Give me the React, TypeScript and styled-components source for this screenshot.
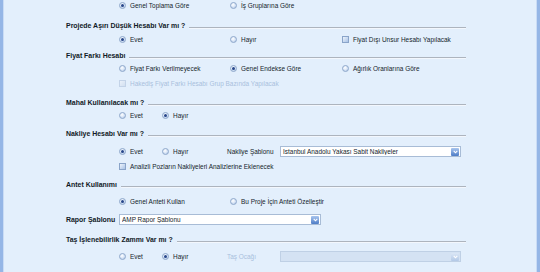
import React from "react";
import styled, { createGlobalStyle } from "styled-components";

const GlobalStyle = createGlobalStyle`
  html, body {
    margin: 0;
    padding: 0;
  }
  body {
    background: #e3effc;
    font-family: "Liberation Sans", Arial, sans-serif;
  }
`;

const Frame = styled.div`
  width: 540px;
  height: 272px;
  box-sizing: border-box;
  overflow: hidden;
  background: #e3effc;
  border-left: 3px solid #95b6e6;
  border-right: 3px solid #95b6e6;
  box-shadow: inset 1px 0 0 #cadcf5, inset -1px 0 0 #cadcf5;
`;

const Content = styled.div`
  padding-left: 63px;
  width: 400px;
`;

const Row = styled.div<{ $mt: number; $indent?: boolean }>`
  display: flex;
  align-items: center;
  height: 13px;
  margin-top: ${(p) => p.$mt}px;
  padding-left: ${(p) => (p.$indent ? 53 : 0)}px;
  box-sizing: border-box;
  width: 400px;
`;

const HeadingText = styled.span`
  font-weight: bold;
  font-size: 6.95px;
  color: #111a27;
  white-space: nowrap;
`;

const Rule = styled.div`
  flex: 1;
  height: 1px;
  margin-left: 4px;
  margin-top: 4px;
  background: #adb4be;
  box-shadow: 0 1px 0 #f3f7fd;
`;

const Cell = styled.div<{ $w?: number; $disabled?: boolean }>`
  display: flex;
  align-items: center;
  gap: 4px;
  flex: none;
  width: ${(p) => (p.$w ? `${p.$w}px` : "auto")};
  font-size: 6.45px;
  color: ${(p) => (p.$disabled ? "#a9bfdc" : "#141d2b")};
  white-space: nowrap;
`;

const Radio = styled.span<{ $on?: boolean }>`
  width: 7px;
  height: 7px;
  flex: none;
  box-sizing: border-box;
  border-radius: 50%;
  border: 1px solid #8ea8cb;
  background: radial-gradient(circle at 40% 35%, #ffffff 0%, #dde8f7 45%, #a9c1e3 100%);
  display: flex;
  align-items: center;
  justify-content: center;

  &::after {
    content: "";
    width: 3px;
    height: 3px;
    border-radius: 50%;
    background: #27468a;
    display: ${(p) => (p.$on ? "block" : "none")};
  }
`;

const Check = styled.span<{ $disabled?: boolean }>`
  width: 7px;
  height: 7px;
  flex: none;
  box-sizing: border-box;
  border: 1px solid ${(p) => (p.$disabled ? "#c3d3e8" : "#8aa4c9")};
  background: ${(p) =>
    p.$disabled
      ? "linear-gradient(135deg, #eaf1fa, #d2dff0)"
      : "linear-gradient(135deg, #eef4fb, #a8c2e7)"};
`;

const BoldLabel = styled.span<{ $w: number }>`
  width: ${(p) => p.$w}px;
  flex: none;
  font-weight: bold;
  font-size: 6.95px;
  color: #111a27;
  white-space: nowrap;
`;

const Combo = styled.div<{ $w: number; $disabled?: boolean }>`
  width: ${(p) => p.$w}px;
  height: 11px;
  flex: none;
  box-sizing: border-box;
  display: flex;
  align-items: center;
  padding-left: 2px;
  border: 1px solid ${(p) => (p.$disabled ? "#bfd0e5" : "#a8bcd6")};
  background: ${(p) => (p.$disabled ? "#d4e2f3" : "#ffffff")};
  font-size: 6.45px;
  color: #141d2b;
`;

const ComboText = styled.span`
  flex: 1;
  white-space: nowrap;
  overflow: hidden;
`;

const ComboButton = styled.span<{ $disabled?: boolean }>`
  width: 8px;
  height: 8px;
  margin-right: 1px;
  flex: none;
  display: flex;
  align-items: center;
  justify-content: center;
  border-radius: 1px;
  background: ${(p) =>
    p.$disabled
      ? "linear-gradient(#dbe7f6, #b3c9e7)"
      : "linear-gradient(#a9c6ef, #4d7cc6)"};
`;

const Chevron = () => (
  <svg width="5" height="4" viewBox="0 0 5 4">
    <polyline points="0.7,0.8 2.5,2.8 4.3,0.8" fill="none" stroke="#ffffff" strokeWidth="1.1" />
  </svg>
);

interface OptProps {
  label: string;
  on?: boolean;
  w?: number;
}

const RadioOpt: React.FC<OptProps> = ({ label, on, w }) => (
  <Cell $w={w}>
    <Radio $on={on} />
    {label}
  </Cell>
);

const CheckOpt: React.FC<{ label: string; disabled?: boolean; w?: number }> = ({ label, disabled, w }) => (
  <Cell $w={w} $disabled={disabled}>
    <Check $disabled={disabled} />
    {label}
  </Cell>
);

const Heading: React.FC<{ text: string; mt: number }> = ({ text, mt }) => (
  <Row $mt={mt}>
    <HeadingText>{text}</HeadingText>
    <Rule />
  </Row>
);

const Dropdown: React.FC<{ w: number; text?: string; disabled?: boolean }> = ({ w, text, disabled }) => (
  <Combo $w={w} $disabled={disabled}>
    <ComboText>{text}</ComboText>
    <ComboButton $disabled={disabled}>
      <Chevron />
    </ComboButton>
  </Combo>
);

export default function App() {
  return (
    <Frame>
      <GlobalStyle />
      <Content>
        <Row $mt={-1} $indent>
          <RadioOpt label="Genel Toplama Göre" on w={111} />
          <RadioOpt label="İş Gruplarına Göre" />
        </Row>

        <Heading text="Projede Aşırı Düşük Hesabı Var mı ?" mt={7} />
        <Row $mt={1} $indent>
          <RadioOpt label="Evet" on w={111} />
          <RadioOpt label="Hayır" w={112} />
          <CheckOpt label="Fiyat Dışı Unsur Hesabı Yapılacak" />
        </Row>

        <Heading text="Fiyat Farkı Hesabı" mt={3} />
        <Row $mt={0} $indent>
          <RadioOpt label="Fiyat Farkı Verilmeyecek" w={111} />
          <RadioOpt label="Genel Endekse Göre" on w={112} />
          <RadioOpt label="Ağırlık Oranlarına Göre" />
        </Row>
        <Row $mt={2} $indent>
          <CheckOpt label="Hakediş Fiyat Farkı Hesabı Grup Bazında Yapılacak" disabled />
        </Row>

        <Heading text="Mahal Kullanılacak mı ?" mt={6} />
        <Row $mt={0} $indent>
          <RadioOpt label="Evet" w={43} />
          <RadioOpt label="Hayır" on />
        </Row>

        <Heading text="Nakliye Hesabı Var mı ?" mt={5} />
        <Row $mt={5} $indent>
          <RadioOpt label="Evet" on w={43} />
          <RadioOpt label="Hayır" w={65} />
          <Cell $w={53}>Nakliye Şablonu</Cell>
          <Dropdown w={181} text="İstanbul Anadolu Yakası Sabit Nakliyeler" />
        </Row>
        <Row $mt={2} $indent>
          <CheckOpt label="Analizli Pozların Nakliyeleri Analizlerine Eklenecek" />
        </Row>

        <Heading text="Antet Kullanımı" mt={5} />
        <Row $mt={4} $indent>
          <RadioOpt label="Genel Anteti Kullan" on w={111} />
          <RadioOpt label="Bu Proje İçin Anteti Özelleştir" />
        </Row>

        <Row $mt={5}>
          <BoldLabel $w={53}>Rapor Şablonu</BoldLabel>
          <Dropdown w={202} text="AMP Rapor Şablonu" />
        </Row>

        <Heading text="Taş İşlenebilirlik Zammı Var mı ?" mt={7} />
        <Row $mt={4} $indent>
          <RadioOpt label="Evet" w={43} />
          <RadioOpt label="Hayır" on w={65} />
          <Cell $w={53} $disabled>Taş Ocağı</Cell>
          <Dropdown w={181} disabled />
        </Row>
      </Content>
    </Frame>
  );
}
